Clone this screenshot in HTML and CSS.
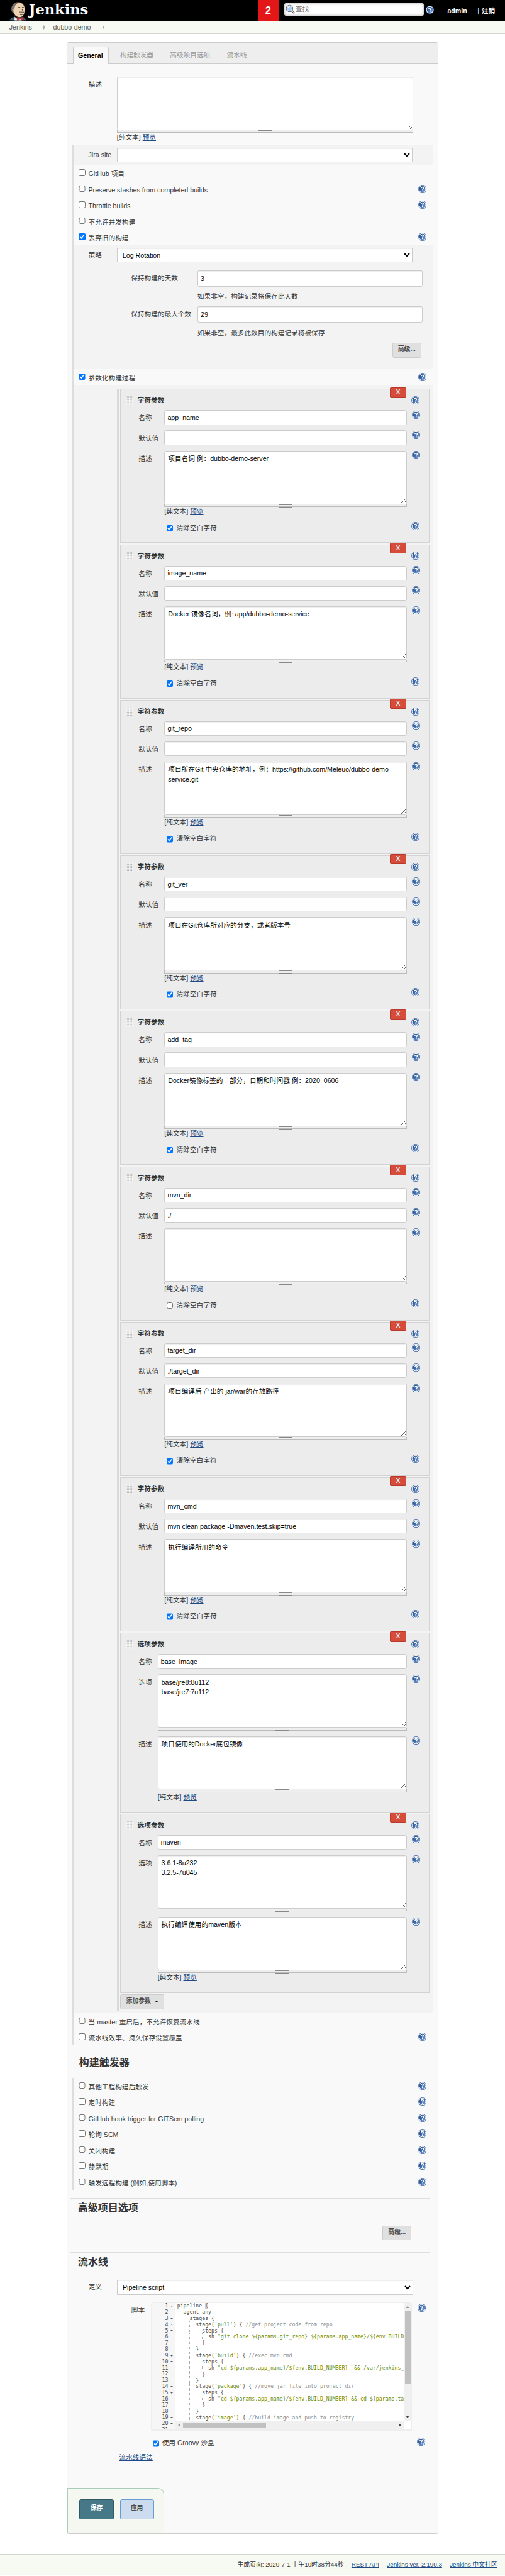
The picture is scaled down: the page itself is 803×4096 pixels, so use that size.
FILE: index.html
```
<!DOCTYPE html>
<html lang="zh-CN">
<head>
<meta charset="utf-8">
<title>dubbo-demo Config [Jenkins]</title>
<link rel="stylesheet" href="styles.css">
</head>
<body>
<svg class="defs" width="0" height="0">
  <defs>
    <linearGradient id="helpFill" x1="0" y1="0" x2="1" y2="1">
      <stop offset="0" stop-color="#1f4480"/><stop offset="0.5" stop-color="#3f6cab"/><stop offset="1" stop-color="#86a9d6"/>
    </linearGradient>
    <symbol id="help" viewBox="0 0 16 16">
      <circle cx="8" cy="8" r="7.9" fill="#3d66a4"/>
      <circle cx="8" cy="8" r="7" fill="#fff"/>
      <circle cx="8" cy="8" r="6" fill="url(#helpFill)"/>
      <path d="M5.9 6.3C5.9 4.9 6.8 4.2 8.1 4.2s2.2.8 2.2 1.9c0 1.5-2.1 1.6-2.1 3.3" fill="none" stroke="#fff" stroke-width="1.7"/>
      <rect x="7.3" y="10.5" width="1.8" height="1.8" fill="#fff"/>
    </symbol>
  </defs>
</svg>

<header class="top">
  <a class="logo" href="#">
    <svg class="butler" viewBox="0 0 34 36">
      <path d="M1 36c0-3 3-6 9-7l5 2 9-2c5 1 7 4 8 7z" fill="#3b6073" stroke="#14232c"/>
      <path d="M10 29l5 4 8-4 1 7H10z" fill="#f4f4f4"/>
      <path d="M6 20C2 12 5 3 14 1c9-2 16 4 16 13 0 8-3 16-10 16-6 0-10-3-11-8z" fill="#efd3b3" stroke="#2d2620"/>
      <path d="M8 22c-5-3-6-11-1-16 3-4 8-5 11-5-4 2-7 4-8 8l-1 5-2 1z" fill="#7b7470" stroke="#3b3532" stroke-width=".6"/>
      <path d="M17 11c1-1 3-1 4 0M24 11c1-1 3-1 4 0M24 14l2 3-2 1M19 20c2-1 3 0 4 0s3-1 5 0M20 24c2 2 5 1 6 0" fill="none" stroke="#2b221c" stroke-width="1.1"/>
      <circle cx="19" cy="14" r=".9" fill="#222"/><circle cx="26" cy="14" r=".9" fill="#222"/>
      <path d="M15 29l6 3 6-3v7l-6-2-6 2z" fill="#d33833" stroke="#7c1a18" stroke-width=".6"/>
    </svg>
    <svg class="wordmark" viewBox="0 0 118 36"><text x="1" y="24.5" textLength="115" lengthAdjust="spacingAndGlyphs">Jenkins</text></svg>
  </a>
  <span class="alerts">2</span>
  <div class="search">
    <svg class="lens" viewBox="0 0 18 18"><path d="M11.5 11.5L16 16" stroke="#555" stroke-width="3.4" stroke-linecap="round"/><path d="M12.5 12.5L15.6 15.6" stroke="#ddd" stroke-width="1.2" stroke-linecap="round"/><circle cx="7.8" cy="7.8" r="6.3" fill="#a9cdf3" stroke="#666b70" stroke-width="1.3"/><circle cx="7.8" cy="7.8" r="5.1" fill="none" stroke="#e8eef5" stroke-width="1"/><path d="M4.5 7C5 5 6.5 4.2 8.5 4.3" stroke="#fff" stroke-width="1.4" fill="none"/></svg>
    <span>查找</span>
  </div>
  <svg class="q"><use href="#help"/></svg>
  <b class="user">admin</b>
  <span class="logout">| <b>注销</b></span>
</header>

<nav class="crumbs"><a>Jenkins</a><i></i><a>dubbo-demo</a><i></i></nav>

<main class="panel">
  <div class="tabs"><span class="tab active">General</span><span class="tab">构建触发器</span><span class="tab">高级项目选项</span><span class="tab">流水线</span></div>

  <div class="intro">
    <div class="row"><label>描述</label><div class="area"><textarea></textarea><div class="handle"></div><p>[纯文本] <a href="#">预览</a></p></div></div>
  </div>

  <div class="group">
    <div class="shade jira"><label>Jira site</label><select><option></option></select></div>
    <div class="opt"><input type="checkbox"><span>GitHub 项目</span></div>
    <div class="opt"><input type="checkbox"><span>Preserve stashes from completed builds</span><svg class="q"><use href="#help"/></svg></div>
    <div class="opt"><input type="checkbox"><span>Throttle builds</span><svg class="q"><use href="#help"/></svg></div>
    <div class="opt"><input type="checkbox"><span>不允许并发构建</span></div>
    <div class="opt"><input type="checkbox" checked><span>丢弃旧的构建</span><svg class="q"><use href="#help"/></svg></div>

    <div class="shade rotation">
      <div class="strategy"><label>策略</label><select><option>Log Rotation</option></select></div>
      <div class="keep"><label>保持构建的天数</label><input type="text" value="3"></div>
      <p>如果非空，构建记录将保存此天数</p>
      <div class="keep"><label>保持构建的最大个数</label><input type="text" value="29"></div>
      <p>如果非空，最多此数目的构建记录将被保存</p>
      <button class="btn">高级...</button>
    </div>

    <div class="opt"><input type="checkbox" checked><span>参数化构建过程</span><svg class="q"><use href="#help"/></svg></div>

    <div class="shade params">
      <div class="list">
        <section class="param">
          <button class="del">X</button>
          <h4><i class="grip"></i>字符参数<svg class="q"><use href="#help"/></svg></h4>
          <div class="row"><label>名称</label><input type="text" value="app_name"><svg class="q"><use href="#help"/></svg></div>
          <div class="row"><label>默认值</label><input type="text"><svg class="q"><use href="#help"/></svg></div>
          <div class="row"><label>描述</label><div class="area"><textarea>项目名词 例：dubbo-demo-server</textarea><div class="handle"></div><p>[纯文本] <a href="#">预览</a></p></div><svg class="q"><use href="#help"/></svg></div>
          <div class="trim"><input type="checkbox" checked><span>清除空白字符</span><svg class="q"><use href="#help"/></svg></div>
        </section>
        <section class="param">
          <button class="del">X</button>
          <h4><i class="grip"></i>字符参数<svg class="q"><use href="#help"/></svg></h4>
          <div class="row"><label>名称</label><input type="text" value="image_name"><svg class="q"><use href="#help"/></svg></div>
          <div class="row"><label>默认值</label><input type="text"><svg class="q"><use href="#help"/></svg></div>
          <div class="row"><label>描述</label><div class="area"><textarea>Docker 镜像名词，例: app/dubbo-demo-service</textarea><div class="handle"></div><p>[纯文本] <a href="#">预览</a></p></div><svg class="q"><use href="#help"/></svg></div>
          <div class="trim"><input type="checkbox" checked><span>清除空白字符</span><svg class="q"><use href="#help"/></svg></div>
        </section>
        <section class="param">
          <button class="del">X</button>
          <h4><i class="grip"></i>字符参数<svg class="q"><use href="#help"/></svg></h4>
          <div class="row"><label>名称</label><input type="text" value="git_repo"><svg class="q"><use href="#help"/></svg></div>
          <div class="row"><label>默认值</label><input type="text"><svg class="q"><use href="#help"/></svg></div>
          <div class="row"><label>描述</label><div class="area"><textarea>项目所在Git 中央仓库的地址，例：https://github.com/Meleuo/dubbo-demo-service.git</textarea><div class="handle"></div><p>[纯文本] <a href="#">预览</a></p></div><svg class="q"><use href="#help"/></svg></div>
          <div class="trim"><input type="checkbox" checked><span>清除空白字符</span><svg class="q"><use href="#help"/></svg></div>
        </section>
        <section class="param">
          <button class="del">X</button>
          <h4><i class="grip"></i>字符参数<svg class="q"><use href="#help"/></svg></h4>
          <div class="row"><label>名称</label><input type="text" value="git_ver"><svg class="q"><use href="#help"/></svg></div>
          <div class="row"><label>默认值</label><input type="text"><svg class="q"><use href="#help"/></svg></div>
          <div class="row"><label>描述</label><div class="area"><textarea>项目在Git仓库所对应的分支，或者版本号</textarea><div class="handle"></div><p>[纯文本] <a href="#">预览</a></p></div><svg class="q"><use href="#help"/></svg></div>
          <div class="trim"><input type="checkbox" checked><span>清除空白字符</span><svg class="q"><use href="#help"/></svg></div>
        </section>
        <section class="param">
          <button class="del">X</button>
          <h4><i class="grip"></i>字符参数<svg class="q"><use href="#help"/></svg></h4>
          <div class="row"><label>名称</label><input type="text" value="add_tag"><svg class="q"><use href="#help"/></svg></div>
          <div class="row"><label>默认值</label><input type="text"><svg class="q"><use href="#help"/></svg></div>
          <div class="row"><label>描述</label><div class="area"><textarea>Docker镜像标签的一部分，日期和时间戳 例：2020_0606</textarea><div class="handle"></div><p>[纯文本] <a href="#">预览</a></p></div><svg class="q"><use href="#help"/></svg></div>
          <div class="trim"><input type="checkbox" checked><span>清除空白字符</span><svg class="q"><use href="#help"/></svg></div>
        </section>
        <section class="param">
          <button class="del">X</button>
          <h4><i class="grip"></i>字符参数<svg class="q"><use href="#help"/></svg></h4>
          <div class="row"><label>名称</label><input type="text" value="mvn_dir"><svg class="q"><use href="#help"/></svg></div>
          <div class="row"><label>默认值</label><input type="text" value="./"><svg class="q"><use href="#help"/></svg></div>
          <div class="row"><label>描述</label><div class="area"><textarea></textarea><div class="handle"></div><p>[纯文本] <a href="#">预览</a></p></div><svg class="q"><use href="#help"/></svg></div>
          <div class="trim"><input type="checkbox"><span>清除空白字符</span><svg class="q"><use href="#help"/></svg></div>
        </section>
        <section class="param">
          <button class="del">X</button>
          <h4><i class="grip"></i>字符参数<svg class="q"><use href="#help"/></svg></h4>
          <div class="row"><label>名称</label><input type="text" value="target_dir"><svg class="q"><use href="#help"/></svg></div>
          <div class="row"><label>默认值</label><input type="text" value="./target_dir"><svg class="q"><use href="#help"/></svg></div>
          <div class="row"><label>描述</label><div class="area"><textarea>项目编译后 产出的 jar/war的存放路径</textarea><div class="handle"></div><p>[纯文本] <a href="#">预览</a></p></div><svg class="q"><use href="#help"/></svg></div>
          <div class="trim"><input type="checkbox" checked><span>清除空白字符</span><svg class="q"><use href="#help"/></svg></div>
        </section>
        <section class="param">
          <button class="del">X</button>
          <h4><i class="grip"></i>字符参数<svg class="q"><use href="#help"/></svg></h4>
          <div class="row"><label>名称</label><input type="text" value="mvn_cmd"><svg class="q"><use href="#help"/></svg></div>
          <div class="row"><label>默认值</label><input type="text" value="mvn clean package -Dmaven.test.skip=true"><svg class="q"><use href="#help"/></svg></div>
          <div class="row"><label>描述</label><div class="area"><textarea>执行编译所用的命令</textarea><div class="handle"></div><p>[纯文本] <a href="#">预览</a></p></div><svg class="q"><use href="#help"/></svg></div>
          <div class="trim"><input type="checkbox" checked><span>清除空白字符</span><svg class="q"><use href="#help"/></svg></div>
        </section>
        <section class="param choice">
          <button class="del">X</button>
          <h4><i class="grip"></i>选项参数<svg class="q"><use href="#help"/></svg></h4>
          <div class="row"><label>名称</label><input type="text" value="base_image"><svg class="q"><use href="#help"/></svg></div>
          <div class="row"><label>选项</label><div class="area"><textarea>base/jre8:8u112
base/jre7:7u112</textarea><div class="handle"></div></div><svg class="q"><use href="#help"/></svg></div>
          <div class="row"><label>描述</label><div class="area"><textarea>项目使用的Docker底包镜像</textarea><div class="handle"></div><p>[纯文本] <a href="#">预览</a></p></div><svg class="q"><use href="#help"/></svg></div>
        </section>
        <section class="param choice">
          <button class="del">X</button>
          <h4><i class="grip"></i>选项参数<svg class="q"><use href="#help"/></svg></h4>
          <div class="row"><label>名称</label><input type="text" value="maven"><svg class="q"><use href="#help"/></svg></div>
          <div class="row"><label>选项</label><div class="area"><textarea>3.6.1-8u232
3.2.5-7u045</textarea><div class="handle"></div></div><svg class="q"><use href="#help"/></svg></div>
          <div class="row"><label>描述</label><div class="area"><textarea>执行编译使用的maven版本</textarea><div class="handle"></div><p>[纯文本] <a href="#">预览</a></p></div><svg class="q"><use href="#help"/></svg></div>
        </section>
        <button class="btn add">添加参数<i class="caret"></i></button>
      </div>
    </div>

    <div class="opt"><input type="checkbox"><span>当 master 重启后，不允许恢复流水线</span></div>
    <div class="opt"><input type="checkbox"><span>流水线效率、持久保存设置覆盖</span><svg class="q"><use href="#help"/></svg></div>
  </div>

  <h2 class="first">构建触发器</h2>
  <div class="group">
    <div class="opt"><input type="checkbox"><span>其他工程构建后触发</span><svg class="q"><use href="#help"/></svg></div>
    <div class="opt"><input type="checkbox"><span>定时构建</span><svg class="q"><use href="#help"/></svg></div>
    <div class="opt"><input type="checkbox"><span>GitHub hook trigger for GITScm polling</span><svg class="q"><use href="#help"/></svg></div>
    <div class="opt"><input type="checkbox"><span>轮询 SCM</span><svg class="q"><use href="#help"/></svg></div>
    <div class="opt"><input type="checkbox"><span>关闭构建</span><svg class="q"><use href="#help"/></svg></div>
    <div class="opt"><input type="checkbox"><span>静默期</span><svg class="q"><use href="#help"/></svg></div>
    <div class="opt"><input type="checkbox"><span>触发远程构建 (例如,使用脚本)</span><svg class="q"><use href="#help"/></svg></div>
  </div>

  <h2>高级项目选项</h2>
  <div class="advanced"><button class="btn">高级...</button></div>

  <h2>流水线</h2>
  <div class="definition"><label>定义</label><select><option>Pipeline script</option></select></div>
  <div class="script">
    <label>脚本</label>
    <div class="editor">
      <div class="gutter"><b class="f">1</b><b>2</b><b class="f">3</b><b class="f">4</b><b class="f">5</b><b>6</b><b>7</b><b>8</b><b class="f">9</b><b class="f">10</b><b>11</b><b>12</b><b>13</b><b class="f">14</b><b class="f">15</b><b>16</b><b>17</b><b>18</b><b class="f">19</b><b class="f">20</b><b>21</b></div>
      <div class="view">
<pre>pipeline <u>{</u>
  agent any
    stages {
    <i>  </i>stage(<s>'pull'</s>) { <em>//get project code from repo</em>
    <i>  </i>  steps {
    <i>    </i><i>  </i>sh <s>"git clone ${params.git_repo} ${params.app_name}/${env.BUILD_N</s>
    <i>  </i>  }
    <i>  </i>}
    <i>  </i>stage(<s>'build'</s>) { <em>//exec mvn cmd</em>
    <i>  </i>  steps {
    <i>    </i><i>  </i>sh <s>"cd ${params.app_name}/${env.BUILD_NUMBER}  &amp;&amp; /var/jenkins_ho</s>
    <i>  </i>  }
    <i>  </i>}
    <i>  </i>stage(<s>'package'</s>) { <em>//move jar file into project_dir</em>
    <i>  </i>  steps {
    <i>    </i><i>  </i>sh <s>"cd ${params.app_name}/${env.BUILD_NUMBER} &amp;&amp; cd ${params.targ</s>
    <i>  </i>  }
    <i>  </i>}
    <i>  </i>stage(<s>'image'</s>) { <em>//build image and push to registry</em></pre>
        <div class="hbar"><i class="left"></i><span></span><i class="right"></i></div>
      </div>
      <div class="vbar"><i class="up"></i><span></span><i class="down"></i></div>
    </div>
    <svg class="q"><use href="#help"/></svg>
  </div>
  <div class="sandbox"><input type="checkbox" checked><span>使用 Groovy 沙盒</span><svg class="q"><use href="#help"/></svg></div>
  <a class="syntax" href="#">流水线语法</a>

  <div class="save"><button class="primary">保存</button><button>应用</button></div>
</main>

<footer><span>生成页面: 2020-7-1 上午10时38分44秒</span><a href="#">REST API</a><a href="#">Jenkins ver. 2.190.3</a><a href="#">Jenkins 中文社区</a></footer>
</body>
</html>
```

FILE: styles.css
```
/* 1rem is ten layout units; the root size sets the scale of the whole page */
* { box-sizing: border-box; }
html { background: #fff; font-size: 8.215px; }
body {
  margin: 0;
  font: 1.3rem/2rem "Liberation Sans", "Noto Sans CJK SC", sans-serif;
  color: #333;
}
.defs { position: absolute; }
p, h2, h4, pre { margin: 0; }
a { color: #204a87; }
button, input, select, textarea { font: inherit; margin: 0; }
button { white-space: nowrap; }
label { flex: none; }
input[type=checkbox] { width: 1.3rem; height: 1.3rem; flex: none; }
.q { width: 1.6rem; height: 1.6rem; flex: none; display: block; }

/* header */
.top { height: 4rem; background: #000; color: #fff; display: flex; overflow: hidden; }
.logo { display: flex; flex: none; width: 49.9rem; padding: .4rem 0 0 1.8rem; }
.butler { width: 3.4rem; height: 3.6rem; }
.wordmark { width: 11.8rem; height: 3.6rem; margin-left: .3rem; }
.wordmark text { font: bold 26px "DejaVu Serif Condensed", "DejaVu Serif", serif; fill: #fff; }
.alerts { flex: none; width: 4rem; background: #e31717; font-weight: bold; font-size: 2rem; line-height: 4rem; text-align: center; }
.search {
  flex: none; width: 27rem; height: 2.4rem; margin: .6rem .4rem 0 1.1rem; padding: .3rem;
  display: flex; gap: .1rem; background: #fff; border-radius: .4rem;
  color: #757575; line-height: 1.9rem; box-shadow: inset 0 0 4px #aaa;
}
.lens { width: 1.8rem; height: 1.8rem; }
.top .q { margin-top: 1.1rem; }
.user { margin: 1.1rem 0 0 2.6rem; }
.logout { margin: 1.1rem 0 0 2rem; white-space: nowrap; }
.logout b { margin-left: .1rem; }

.crumbs { height: 2.55rem; background: #f6faf2; border-bottom: 1px solid #d3d7cf; display: flex; padding-left: 1.8rem; line-height: 2.5rem; color: #555753; }
.crumbs a { color: inherit; }
.crumbs i { border: .4rem solid transparent; border-left-color: #aaa; border-right: 0; margin: .9rem 1.5rem 0 2.2rem; width: .4rem; height: .8rem; }
.crumbs i:nth-of-type(2) { margin-left: 2.3rem; }

/* panel */
.panel { margin: 1.55rem 0 0 12.95rem; width: 71.95rem; height: 482.4rem; border: 1px solid #ccc; border-radius: .4rem; background: #f9f9f9; }
.tabs { height: 4.1rem; background: #eee; border-bottom: 1px solid #ccc; display: flex; padding: .8rem 0 0 1rem; color: #999; }
.tab { padding: .6rem 1.6rem 0; height: 3.35rem; }
.tab.active { width: 7rem; padding: .6rem .9rem 0; margin-right: .55rem; font-weight: bold; color: #000; background: #f9f9f9; border: 1px solid #ccc; border-bottom: 0; border-radius: .4rem .4rem 0 0; }

input[type=text], textarea, select { border: 1px solid #ccc; background: #fff; color: #000; display: block; box-shadow: inset 0 1px 1px rgba(0,0,0,.075); }
input[type=text] { height: 2.83rem; border-radius: .3rem; padding: 0 .5rem; }
textarea { width: 100%; height: 10.33rem; border-radius: .3rem; padding: .5rem .6rem; line-height: 1.857rem; resize: both; overflow: hidden; }
select { width: 57.3rem; height: 2.84rem; padding: 0 .5rem; border-radius: 0; }
.area { flex: none; }
.area p { height: 1.9rem; line-height: 1.9rem; }
.handle { height: .53rem; border: 1px solid #bbb; border-top: 0; background: #eee; display: flex; justify-content: center; }
.handle::after { content: ""; width: 2.7rem; height: 3px; border: solid #888; border-width: 1px 0; }
.row { display: flex; }
.row > label { padding-top: .5rem; }

.intro { height: 15.75rem; padding: 2.55rem 0 0 4.05rem; }
.intro label { width: 5.5rem; }
.intro .area { width: 57.3rem; }
.intro textarea { height: 10.35rem; }

.group { margin-left: .75rem; width: 70rem; border-left: .5rem solid #ddd; }
.opt { height: 3.1rem; display: flex; padding: .7rem 1.3rem 0 .9rem; }
.opt input { margin: .1rem .6rem 0 0; }
.opt .q { margin-left: auto; }
.shade { background: #f3f3f3; }
.shade > label, .strategy label, .definition label { width: 5.5rem; line-height: 2.8rem; }
.jira { height: 3.9rem; padding: .5rem 0 0 2.8rem; display: flex; }

.rotation { height: 24rem; padding: .5rem 0 0 2.8rem; }
.strategy { display: flex; margin-bottom: 1.55rem; }
.keep { display: flex; padding-left: 8.25rem; }
.keep label { width: 12.85rem; line-height: 3rem; }
.keep input[type=text] { width: 43.6rem; height: 3.14rem; }
.rotation p { padding: .9rem 0 0 21.1rem; height: 3.86rem; }
.btn {
  height: 2.87rem; border: 1px solid #ccc; border-radius: .3rem; background: #e0e0e0; color: #4d4d4d;
  font-weight: bold; font-size: 1.2rem; padding: 0 1rem .3rem; display: block;
}
.rotation .btn { width: 5.6rem; margin-left: 58.8rem; }

/* build parameters */
.params { padding: .73rem 0 .5rem 8.3rem; height: 315.1rem; }
.list { border-left: .5rem solid #d9d9d9; padding-left: .2rem; width: 60.55rem; height: 313.87rem; }
.param { position: relative; height: 29.8rem; margin-bottom: .3rem; border: 1px solid #d3d3d3; background: #ececec; padding: 1rem 0 0 1.1rem; }
.param.choice { height: 34.7rem; }
.del { position: absolute; right: 4.4rem; top: -.4rem; width: 3.2rem; height: 2rem; background: #d54c3b; border: 1px solid #b8392b; border-radius: .2rem; color: #eee; font-weight: bold; font-size: 1.25rem; line-height: 1.7rem; padding: 0; }
.param h4 { display: flex; align-items: center; height: 2.2rem; margin-bottom: .8rem; font-size: 1.3rem; }
.param h4 .q { margin-left: auto; margin-right: 1.8rem; }
.grip { width: 1.25rem; height: 1.8rem; margin-right: .85rem; background: #f8f8f8 radial-gradient(circle at .15rem .15rem, #aaa .07rem, transparent .11rem) 0 0 / .3rem .3rem; }
.param .row { padding-left: 2.3rem; margin-bottom: 1.09rem; }
.param .row > label { width: 5rem; }
.param .row > input, .param .area { width: 46.9rem; }
.choice .row > label { width: 3.7rem; }
.choice .row > input, .choice .area { width: 48.2rem; }
.param .row > .q { margin: .06rem 0 0 1rem; }
.trim { display: flex; padding-left: 7.7rem; margin-right: 1.8rem; margin-top: -.1rem; }
.trim input { margin: .6rem .65rem 0 0; }
.trim span { line-height: 2.3rem; }
.trim .q { margin-left: auto; }
.add { width: 8.5rem; display: flex; align-items: center; gap: .7rem; }
.caret { border: .4rem solid transparent; border-top-color: #000; border-bottom: 0; margin-top: .2rem; }

/* sections */
h2 { margin: 1.5rem 0 0 .45rem; width: 69.8rem; height: 4.87rem; border-top: 1px solid #ddd; padding-left: 1.55rem; font-size: 1.95rem; line-height: 3.7rem; }
h2.first { margin-left: .75rem; width: 69.5rem; padding-left: 1.5rem; }
.advanced { padding: .5rem 0 0 60.95rem; height: 4.13rem; }
.advanced .btn { width: 5.6rem; }
.definition { display: flex; padding: .5rem 0 0 4.05rem; height: 4.9rem; }
.definition select { margin-top: .05rem; }
.script { display: flex; padding-left: 12.35rem; height: 26.6rem; }
.script label { width: 3.75rem; padding-top: .5rem; }
.script .q { margin: .2rem 0 0 1rem; }
.editor { width: 50.6rem; height: 24.95rem; background: #eee; border: 1px solid #eee; border-radius: .4rem; display: flex; font: 1rem/1.2rem "DejaVu Sans Mono", monospace; color: #4d4d4c; overflow: hidden; }
.gutter { flex: none; width: 4.6rem; height: 24.4rem; overflow: hidden; background: #f6f6f6; padding-right: 1.35rem; text-align: right; }
.gutter b { display: block; font-weight: normal; height: 1.2rem; position: relative; }
.gutter .f::after { content: ""; position: absolute; right: -.95rem; top: .45rem; border: .28rem solid transparent; border-top: .35rem solid #555; border-bottom: 0; }
.view { flex: none; width: 44.3rem; background: #fff; height: 24.4rem; }
.view pre { height: 22.9rem; padding-left: .4rem; font: inherit; overflow: hidden; }
.view s { color: #718c00; text-decoration: none; }
.view em { color: #8e908c; font-style: normal; }
.view u { text-decoration: none; outline: 1px solid #ccc; outline-offset: -1px; }
.view i { font-style: normal; background: repeating-linear-gradient(#aaa 0 1px, transparent 1px 2px) left / 1px 100% no-repeat; }
.hbar { height: 1.5rem; background: #f0f0f0; display: flex; align-items: center; padding: 0 .5rem; }
.hbar span { width: 16rem; height: 1.1rem; background: #c1c1c1; margin: 0 auto 0 .6rem; }
.view .hbar i, .vbar i { background: none; border: .4rem solid transparent; }
.view .hbar .left { border-right: .5rem solid #999; border-left: 0; }
.view .hbar .right { border-left: .5rem solid #444; border-right: 0; }
.vbar { flex: none; width: 1.5rem; height: 22.9rem; background: #f0f0f0; display: flex; flex-direction: column; align-items: center; padding: .6rem 0; box-shadow: 0 1.5rem #fff; }
.vbar span { width: 1.1rem; height: 14.1rem; background: #c1c1c1; margin: .5rem 0 auto; }
.vbar .up { border-bottom: .4rem solid #999; border-top: 0; }
.vbar .down { border-top: .5rem solid #444; border-bottom: 0; }
.sandbox { display: flex; padding-left: 16.45rem; width: 69.25rem; height: 2.75rem; margin-top: -.4rem; }
.sandbox input { margin: .45rem .55rem 0 0; }
.sandbox .q { margin-left: auto; }
.syntax { display: block; margin-left: 10rem; width: 7rem; }
.save { margin-top: 4.95rem; width: 18.7rem; height: 8.75rem; background: #f4f8f0; border: 1px solid #a9cdb9; border-radius: 0 1.2rem 0 0; display: flex; gap: 1.2rem; padding: 2rem 0 0 2.2rem; }
.save button { width: 6.6rem; height: 3.9rem; border: 1px solid #669bd4; border-radius: .3rem; background: #ccdcee; color: #4d4d4d; font-weight: bold; font-size: 1.2rem; padding: 0 0 .3rem; }
.save .primary { background: #467888; border-color: #315a68; color: #fff; }

footer { margin-top: 3.8rem; height: 4.2rem; border-top: 1px solid #d3d7cf; background: #f6faf2; display: flex; justify-content: flex-end; gap: 1.5rem; padding: 1rem 1.5rem 0 0; font-size: 1.2rem; }
```
